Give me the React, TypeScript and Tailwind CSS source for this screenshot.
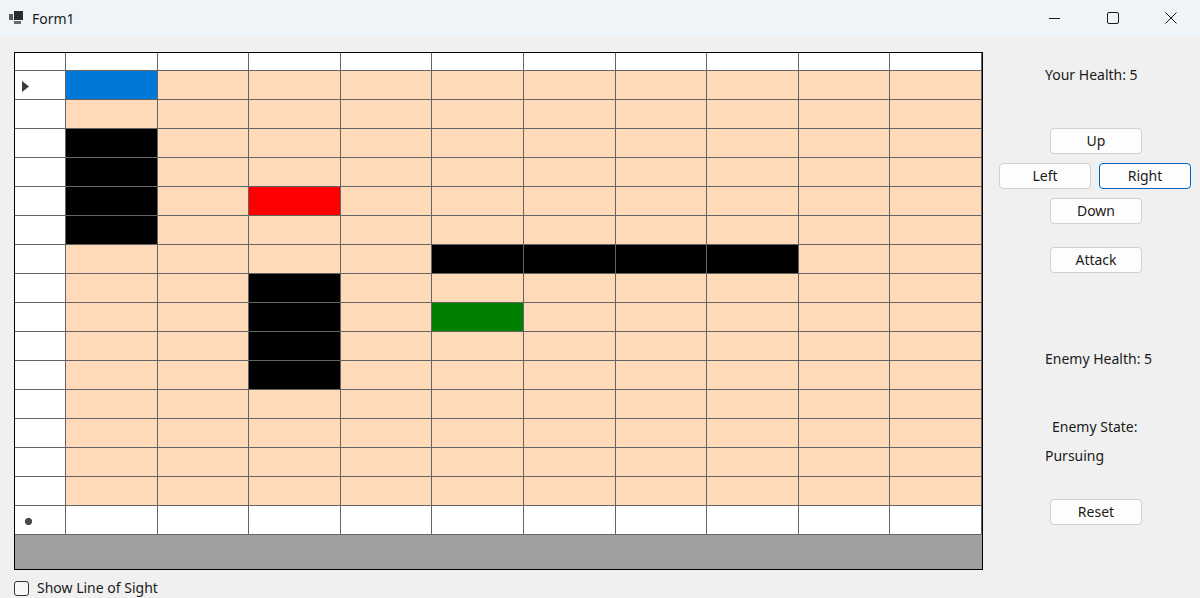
import React from 'react';

// map of the board: . peach, B player (blue), X wall, R enemy, G goal
const board = [
  'B.........',
  '..........',
  'X.........',
  'X.........',
  'X.R.......',
  'X.........',
  '....XXXX..',
  '..X.......',
  '..X.G.....',
  '..X.......',
  '..X.......',
  '..........',
  '..........',
  '..........',
  '..........',
];

const cellColor: Record<string, string> = {
  '.': 'bg-[#FFDAB9]',
  B: 'bg-[#0078D7]',
  X: 'bg-black',
  R: 'bg-[#FF0000]',
  G: 'bg-[#008000]',
};

const WinButton = ({ label, focused = false }: { label: string; focused?: boolean }) => (
  <button
    className={`w-[92px] h-[26px] bg-[#FDFDFD] border rounded-[4px] text-[14px] text-[#1b1b1b] leading-none ${
      focused ? 'border-[#0067C0]' : 'border-[#D0D0D0]'
    }`}
  >
    {label}
  </button>
);

const TitleBar = () => (
  <div className="h-[36px] bg-[#EFF4F9] flex items-center relative">
    <svg width="16" height="16" viewBox="0 0 16 16" className="ml-[8px]">
      <rect x="1" y="4" width="4" height="6" fill="#5a5a5a" />
      <rect x="6" y="1" width="9" height="9" fill="#2b2b2b" />
      <rect x="6" y="11" width="7" height="3" fill="#6a6a6a" />
    </svg>
    <span className="ml-[8px] text-[14px] text-[#1a1a1a]">Form1</span>
    <div className="ml-auto flex h-full">
      <div className="w-[58px] flex items-center justify-center">
        <svg width="12" height="12" viewBox="0 0 12 12">
          <line x1="0" y1="6.5" x2="11" y2="6.5" stroke="#1a1a1a" strokeWidth="1" />
        </svg>
      </div>
      <div className="w-[58px] flex items-center justify-center">
        <svg width="12" height="12" viewBox="0 0 12 12">
          <rect x="0.5" y="0.5" width="11" height="11" rx="1.5" fill="none" stroke="#1a1a1a" strokeWidth="1" />
        </svg>
      </div>
      <div className="w-[58px] flex items-center justify-center">
        <svg width="12" height="12" viewBox="0 0 12 12">
          <path d="M0.5 0.5 L11.5 11.5 M11.5 0.5 L0.5 11.5" stroke="#1a1a1a" strokeWidth="1" />
        </svg>
      </div>
    </div>
  </div>
);

const Grid = () => {
  const rowCls = 'grid grid-cols-[51px_repeat(10,1fr)]';
  const line = 'border-r border-b border-[#646464]';
  return (
    <div className="w-[969px] h-[518px] border border-black bg-[#A0A0A0] flex flex-col">
      {/* column headers */}
      <div className={`${rowCls} h-[18px]`}>
        {Array.from({ length: 11 }).map((_, i) => (
          <div key={i} className={`bg-white ${line}`} />
        ))}
      </div>
      {board.map((row, r) => (
        <div key={r} className={`${rowCls} h-[29px]`}>
          <div className={`bg-white ${line} flex items-center`}>
            {r === 0 && (
              <svg width="7" height="11" viewBox="0 0 7 11" className="ml-[7px] mt-[2px]">
                <path d="M0 0 L7 5.5 L0 11 Z" fill="#3c3c3c" />
              </svg>
            )}
          </div>
          {row.split('').map((c, i) => (
            <div key={i} className={`${cellColor[c]} ${line}`} />
          ))}
        </div>
      ))}
      {/* new row */}
      <div className={`${rowCls} h-[29px]`}>
        <div className={`bg-white ${line} flex items-center`}>
          <svg width="7" height="7" viewBox="0 0 7 7" className="ml-[10px] mt-[3px]">
            <path d="M2 0 L5 0 L7 2 L7 5 L5 7 L2 7 L0 5 L0 2 Z" fill="#4a4a4a" />
          </svg>
        </div>
        {Array.from({ length: 10 }).map((_, i) => (
          <div key={i} className={`bg-white ${line}`} />
        ))}
      </div>
    </div>
  );
};

export default function App() {
  return (
    <div
      className="w-[1200px] h-[598px] bg-[#F0F0F0] overflow-hidden text-[#1a1a1a]"
      style={{ fontFamily: '"Noto Sans", "Open Sans", sans-serif' }}
    >
      <TitleBar />
      <div className="flex">
        <div className="ml-[14px] mt-[16px] flex flex-col">
          <Grid />
          <label className="mt-[8px] flex items-center">
            <span className="w-[15px] h-[15px] border border-[#333] rounded-[3px] bg-[#F8F8F8]" />
            <span className="ml-[8px] text-[14px] leading-[20px]">Show Line of Sight</span>
          </label>
        </div>
        <div className="ml-[16px] w-[192px] flex flex-col text-[14px] leading-[20px]">
          <div className="mt-[29px] ml-[46px]">Your Health: 5</div>
          <div className="mt-[43px] ml-[51px]">
            <WinButton label="Up" />
          </div>
          <div className="mt-[9px] flex gap-[8px]">
            <WinButton label="Left" />
            <WinButton label="Right" focused />
          </div>
          <div className="mt-[9px] ml-[51px]">
            <WinButton label="Down" />
          </div>
          <div className="mt-[23px] ml-[51px]">
            <WinButton label="Attack" />
          </div>
          <div className="mt-[76px] ml-[46px]">Enemy Health: 5</div>
          <div className="mt-[48px] ml-[53px]">Enemy State:</div>
          <div className="mt-[9px] ml-[46px]">Pursuing</div>
          <div className="mt-[33px] ml-[51px]">
            <WinButton label="Reset" />
          </div>
        </div>
      </div>
    </div>
  );
}
